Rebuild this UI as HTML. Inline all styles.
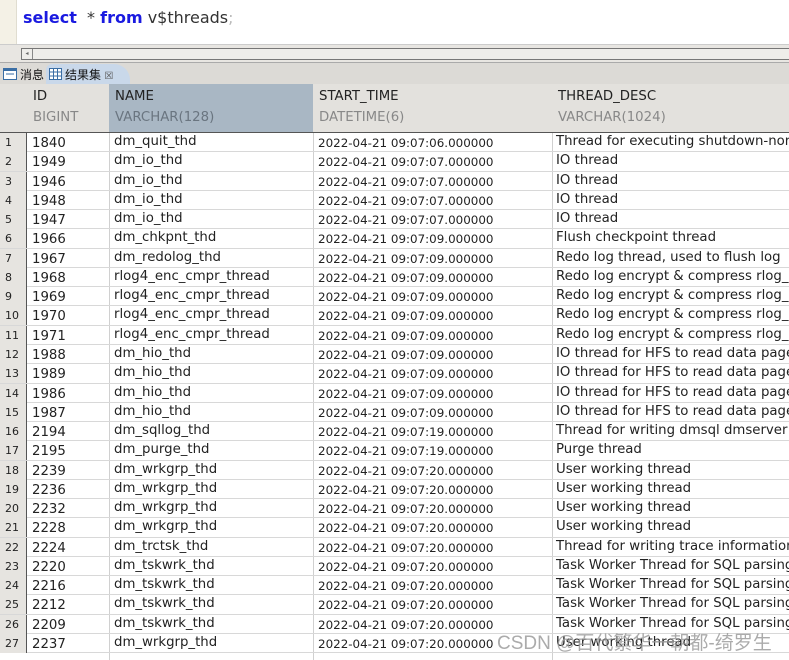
<!DOCTYPE html><html><head><meta charset="utf-8"><style>
body{margin:0;width:789px;height:660px;overflow:hidden;background:#fff;font-family:"DejaVu Sans","Liberation Sans",sans-serif;position:relative}
.ed{position:absolute;left:0;top:0;width:789px;height:44px;background:#fff}
.gut{position:absolute;left:0;top:0;width:16px;height:44px;background:#f4f1e6;border-right:1px solid #e0ddd0}
.sql{position:absolute;left:23px;top:8px;font-size:16px;color:#333}
.sql b{color:#1a1ae0}
.sb{position:absolute;left:0;top:44px;width:789px;height:18px;background:#e8e6e2;border-top:1px solid #ccc}
.sbt{position:absolute;left:21px;top:3px;width:768px;height:10px;border:1px solid #777;border-right:none;background:#eeedea}
.sbt i{position:absolute;left:0;top:0;width:10px;height:10px;border-right:1px solid #888;font-size:6px;color:#666;font-style:normal;text-align:center;line-height:10px}
.tb{position:absolute;left:0;top:62px;width:789px;height:22px;background:#dcdad6;border-top:1px solid #aaa}
.tab{position:absolute;top:3px;font-size:12px;font-family:"Liberation Sans","Noto Sans CJK SC",sans-serif;color:#111}
.act{position:absolute;left:46px;top:1px;width:84px;height:21px;background:#c9d8ea;border-radius:6px 16px 0 0}
.hd{position:absolute;top:84px;height:49px;background:#e3e1dd;border-right:1px solid #555;border-bottom:1px solid #555;box-sizing:border-box}
.hd .a{position:absolute;left:6px;top:5px;font-size:13.3px;color:#222}
.hd .b{position:absolute;left:6px;top:26px;font-size:13.3px;color:#888}
.row{position:absolute;left:0;width:789px;height:19.27px;border-bottom:1px solid #d8d8d8;box-sizing:border-box;font-size:13.3px;color:#222}
.row span{position:absolute;top:1px;white-space:nowrap}
.n{left:0;width:27px;height:19px;background:#e6e4e0;border-right:1px solid #555;box-sizing:border-box;font-size:11px!important;padding-left:5px;top:0!important;line-height:19px}
.v{position:absolute;top:133px;width:1px;height:527px;background:#d0d0d0}
</style></head><body>
<div class="ed"><div class="gut"></div><div class="sql"><b>select</b>&nbsp; * <b>from</b> v$threads<span style="color:#bbb">;</span></div></div>
<div class="sb"><div class="sbt"><i>◂</i></div></div>
<div class="tb"><div class="act"></div>
<svg style="position:absolute;left:3px;top:5px" width="14" height="12"><rect x="0.5" y="0.5" width="13" height="11" fill="#fff" stroke="#3a6ea5"/><rect x="1" y="1" width="12" height="2" fill="#3a6ea5"/><line x1="3" y1="6" x2="11" y2="6" stroke="#3a6ea5"/></svg>
<span class="tab" style="left:20px">消息</span>
<svg style="position:absolute;left:49px;top:5px" width="13" height="12"><rect x="0.5" y="0.5" width="12" height="11" fill="#fff" stroke="#3a6ea5"/><path d="M0 4H13M0 8H13M4.5 0V12M8.5 0V12" stroke="#3a6ea5"/></svg>
<span class="tab" style="left:65px">结果集 <span style="font-size:10px;color:#555">☒</span></span></div>
<div class="hd" style="left:0;width:28px"></div>
<div class="hd" style="left:27px;width:83px"><div class="a">ID</div><div class="b">BIGINT</div></div>
<div class="hd" style="left:109px;width:205px;background:#a9b7c4"><div class="a">NAME</div><div class="b" style="color:#6a7580">VARCHAR(128)</div></div>
<div class="hd" style="left:313px;width:240px"><div class="a">START_TIME</div><div class="b">DATETIME(6)</div></div>
<div class="hd" style="left:552px;width:240px;border-right:none"><div class="a">THREAD_DESC</div><div class="b">VARCHAR(1024)</div></div>
<div class="v" style="left:109px"></div><div class="v" style="left:313px"></div><div class="v" style="left:552px"></div>
<div id="rows"></div>
<div style="position:absolute;left:497px;top:628px;font-size:19px;color:rgba(150,150,150,.8);font-family:'Liberation Sans','Noto Sans CJK SC',sans-serif;white-space:nowrap">CSDN @百代繁华一朝都-绮罗生</div>
<script>
var d=[["1840","dm_quit_thd","06","Thread for executing shutdown-normal"],["1949","dm_io_thd","07","IO thread"],["1946","dm_io_thd","07","IO thread"],["1948","dm_io_thd","07","IO thread"],["1947","dm_io_thd","07","IO thread"],["1966","dm_chkpnt_thd","09","Flush checkpoint thread"],["1967","dm_redolog_thd","09","Redo log thread, used to flush log"],["1968","rlog4_enc_cmpr_thread","09","Redo log encrypt & compress rlog_"],["1969","rlog4_enc_cmpr_thread","09","Redo log encrypt & compress rlog_"],["1970","rlog4_enc_cmpr_thread","09","Redo log encrypt & compress rlog_"],["1971","rlog4_enc_cmpr_thread","09","Redo log encrypt & compress rlog_"],["1988","dm_hio_thd","09","IO thread for HFS to read data pages"],["1989","dm_hio_thd","09","IO thread for HFS to read data pages"],["1986","dm_hio_thd","09","IO thread for HFS to read data pages"],["1987","dm_hio_thd","09","IO thread for HFS to read data pages"],["2194","dm_sqllog_thd","19","Thread for writing dmsql dmserver"],["2195","dm_purge_thd","19","Purge thread"],["2239","dm_wrkgrp_thd","20","User working thread"],["2236","dm_wrkgrp_thd","20","User working thread"],["2232","dm_wrkgrp_thd","20","User working thread"],["2228","dm_wrkgrp_thd","20","User working thread"],["2224","dm_trctsk_thd","20","Thread for writing trace information"],["2220","dm_tskwrk_thd","20","Task Worker Thread for SQL parsing"],["2216","dm_tskwrk_thd","20","Task Worker Thread for SQL parsing"],["2212","dm_tskwrk_thd","20","Task Worker Thread for SQL parsing"],["2209","dm_tskwrk_thd","20","Task Worker Thread for SQL parsing"],["2237","dm_wrkgrp_thd","20","User working thread"]];
var h="";d.forEach(function(r,i){h+='<div class="row" style="top:'+(133+i*19.27)+'px"><span class="n">'+(i+1)+'</span><span style="left:32px;top:3px">'+r[0]+'</span><span style="left:114px">'+r[1]+'</span><span style="left:318px;top:3px;font-size:11.9px">2022-04-21 09:07:'+r[2]+'.000000</span><span style="left:556px">'+r[3]+'</span></div>'});
document.getElementById("rows").innerHTML=h;
</script>
</body></html>
